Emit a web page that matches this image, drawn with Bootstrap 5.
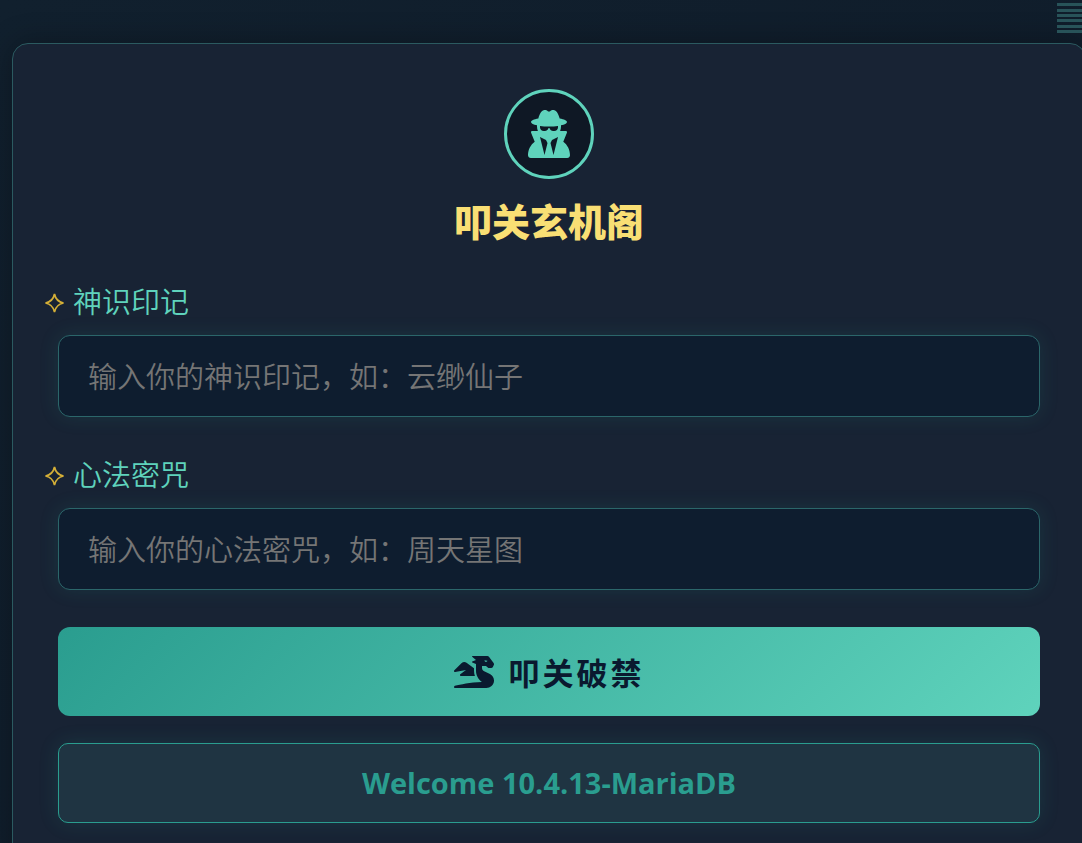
<!DOCTYPE html>
<html lang="zh-CN">
<head>
<meta charset="utf-8">
<meta name="viewport" content="width=device-width, initial-scale=1">
<title>叩关玄机阁</title>
<link href="https://cdn.jsdelivr.net/npm/bootstrap@5.3.0/dist/css/bootstrap.min.css" rel="stylesheet">
<style>
  body {
    background: linear-gradient(135deg, #11202e, #0f1b29);
    color: #5fd3bc;
    font-family: "Open Sans", "Noto Sans CJK SC", sans-serif;
    font-size: 29px;
    line-height: 44px;
    overflow-x: hidden;
    min-height: 100vh;
  }
  .trigram { position: absolute; top: 3px; right: 0; }
  .gate-panel {
    margin: 43px -4px 0 12px;
    padding: 45px;
    background: #182334;
    border: 1px solid #2b5a60;
    border-radius: 16px;
    box-shadow: 0 0 30px rgba(0, 0, 0, .3);
  }
  .crest {
    width: 90px;
    height: 90px;
    border: 3px solid #5fd3bc;
    background: #0f1825;
  }
  .gate-title {
    color: #f9df74;
    font-size: 38px;
    line-height: 48px;
    font-weight: 900;
    margin: 18px 0 35px;
  }
  .rune-label { gap: 8px; margin: 0 0 11px -14px; font-weight: 350; }
  .rune-field { margin-bottom: 36px; }
  .rune-input.form-control {
    height: 82px;
    padding: 0 29px;
    background: #0e1d2f;
    border: 1px solid #2b666a;
    border-radius: 12px;
    color: #e0e6ed;
    font-size: 29px;
    font-weight: 350;
    box-shadow: 0 0 20px rgba(45, 160, 145, .14);
  }
  .rune-input.form-control::placeholder { color: #757575; opacity: 1; }
  .break-btn.btn {
    gap: 15px;
    height: 89px;
    margin-top: 37px;
    padding: 3px 12px 0;
    border: 0;
    border-radius: 12px;
    background: linear-gradient(135deg, #2a9d8f, #5fd3bc);
    color: #0a192f;
    font-size: 31px;
    font-weight: 700;
    letter-spacing: 3px;
  }
  .notice {
    margin-top: 27px;
    padding: 17px;
    background: #1f3442;
    border: 1px solid #2a9d8f;
    border-radius: 10px;
    color: #2a9d8f;
    font-weight: 700;
    box-shadow: 0 0 20px rgba(45, 160, 145, .16);
  }
</style>
</head>
<body>
<svg class="trigram" width="25" height="30" viewBox="0 0 25 30" fill="#285359" aria-hidden="true">
  <path d="M0 0h25v3H0zM0 6h25v3H0zM0 11h25v3H0zM0 16h25v3H0zM0 22h25v3H0zM0 27h25v3H0z"/>
</svg>
<main class="gate-panel">
  <div class="crest rounded-circle d-flex align-items-center justify-content-center mx-auto">
    <svg width="42" height="48" viewBox="0 0 448 512" fill="#5fd3bc" aria-hidden="true">
      <path d="M224 16c-6.700 0-10.800-2.800-15.500-6.100C201.900 5.400 194 0 176 0c-30.500 0-52 43.700-66 89.400C62.700 98.100 32 112.200 32 128c0 14.300 25 27.100 64.600 35.900c-.4 4-.6 8-.6 12.100c0 17 3.300 33.200 9.300 48H45.400C38 224 32 230 32 237.400c0 1.700 .3 3.400 1 5l38.800 96.900C28.200 371.800 0 423.800 0 482.300C0 498.700 13.300 512 29.700 512H418.300c16.400 0 29.700-13.300 29.700-29.700c0-58.500-28.200-110.400-71.700-143L415 242.400c.6-1.600 1-3.300 1-5c0-7.400-6-13.400-13.400-13.400H342.700c6-14.800 9.300-31 9.300-48c0-4.100-.2-8.100-.6-12.100C391 155.100 416 142.300 416 128c0-15.800-30.700-29.900-78-38.600C324 43.700 302.500 0 272 0c-18 0-25.900 5.400-32.500 9.900c-4.800 3.300-8.800 6.100-15.500 6.100zm56 208H267.600c-16.500 0-31.100-10.600-36.300-26.200c-2.300-7-12.200-7-14.500 0c-5.200 15.600-19.900 26.200-36.300 26.200H168c-22.100 0-40-17.900-40-40V169.600c28.200 4.100 61 6.400 96 6.400s67.800-2.300 96-6.400V184c0 22.100-17.900 40-40 40zm-88 96l16 32L176 480 128 288l64 32zm128-32L272 480 240 352l16-32 64-32z"/>
    </svg>
  </div>
  <h1 class="gate-title text-center">叩关玄机阁</h1>
  <form>
    <div class="rune-field">
      <label class="rune-label d-flex align-items-center" for="mark-name">
        <svg width="21" height="24" viewBox="0 0 21 24" fill="none" stroke="#d4af37" stroke-width="1.7" aria-hidden="true"><path d="M10.500 4Q12 11.500 19.500 13Q12 14.500 10.500 22Q9 14.500 1.500 13Q9 11.500 10.500 4Z"/></svg>
        神识印记
      </label>
      <input class="rune-input form-control" id="mark-name" type="text" placeholder="输入你的神识印记，如：云缈仙子">
    </div>
    <div class="rune-field">
      <label class="rune-label d-flex align-items-center" for="mantra">
        <svg width="21" height="24" viewBox="0 0 21 24" fill="none" stroke="#d4af37" stroke-width="1.7" aria-hidden="true"><path d="M10.500 4Q12 11.500 19.500 13Q12 14.500 10.500 22Q9 14.500 1.500 13Q9 11.500 10.500 4Z"/></svg>
        心法密咒
      </label>
      <input class="rune-input form-control" id="mantra" type="password" placeholder="输入你的心法密咒，如：周天星图">
    </div>
    <button class="break-btn btn w-100 d-flex align-items-center justify-content-center" type="submit">
      <svg width="40" height="34" viewBox="0 0 640 544" fill="currentColor" aria-hidden="true">
        <path d="M18.32 255.78L192 223.96l-91.28 68.69c-10.08 10.08-2.94 27.31 11.31 27.31h222.7c-9.44-26.4-14.73-54.47-14.73-83.38v-42.27l-119.73-87.6c-23.82-15.88-55.29-14.01-77.06 4.59L5.81 227.64c-12.38 10.33-3.45 30.42 12.51 28.14zm556.87 34.1l-100.66-50.31A47.992 47.992 0 0 1 448 196.65v-36.69h64l28.09 22.63c6 6 14.14 9.37 22.63 9.37h30.97a32 32 0 0 0 28.62-17.69l14.31-28.62a32.005 32.005 0 0 0-3.02-33.51l-74.53-99.38C553.02 4.7 543.54 0 533.47 0H296.02c-7.13 0-10.7 8.57-5.66 13.61L352 63.96 292.42 88.8c-5.9 2.95-5.9 11.36 0 14.31L352 127.96v108.62c0 72.08 36.03 139.39 96 179.38-195.59 6.81-344.56 41.01-434.1 60.91C5.78 478.67 0 485.88 0 494.2 0 504 7.95 512 17.76 512h499.08c63.29.01 119.61-47.56 122.99-110.76 2.52-47.28-22.73-90.4-64.64-111.36zM489.18 66.25l45.65 11.41c-2.75 10.91-12.47 18.89-24.13 18.26-12.96-.71-25.85-12.53-21.52-29.67z"/>
      </svg>
      叩关破禁
    </button>
  </form>
  <div class="notice text-center" role="status">Welcome 10.4.13-MariaDB</div>
</main>
<script src="https://cdn.jsdelivr.net/npm/bootstrap@5.3.0/dist/js/bootstrap.bundle.min.js"></script>
</body>
</html>
